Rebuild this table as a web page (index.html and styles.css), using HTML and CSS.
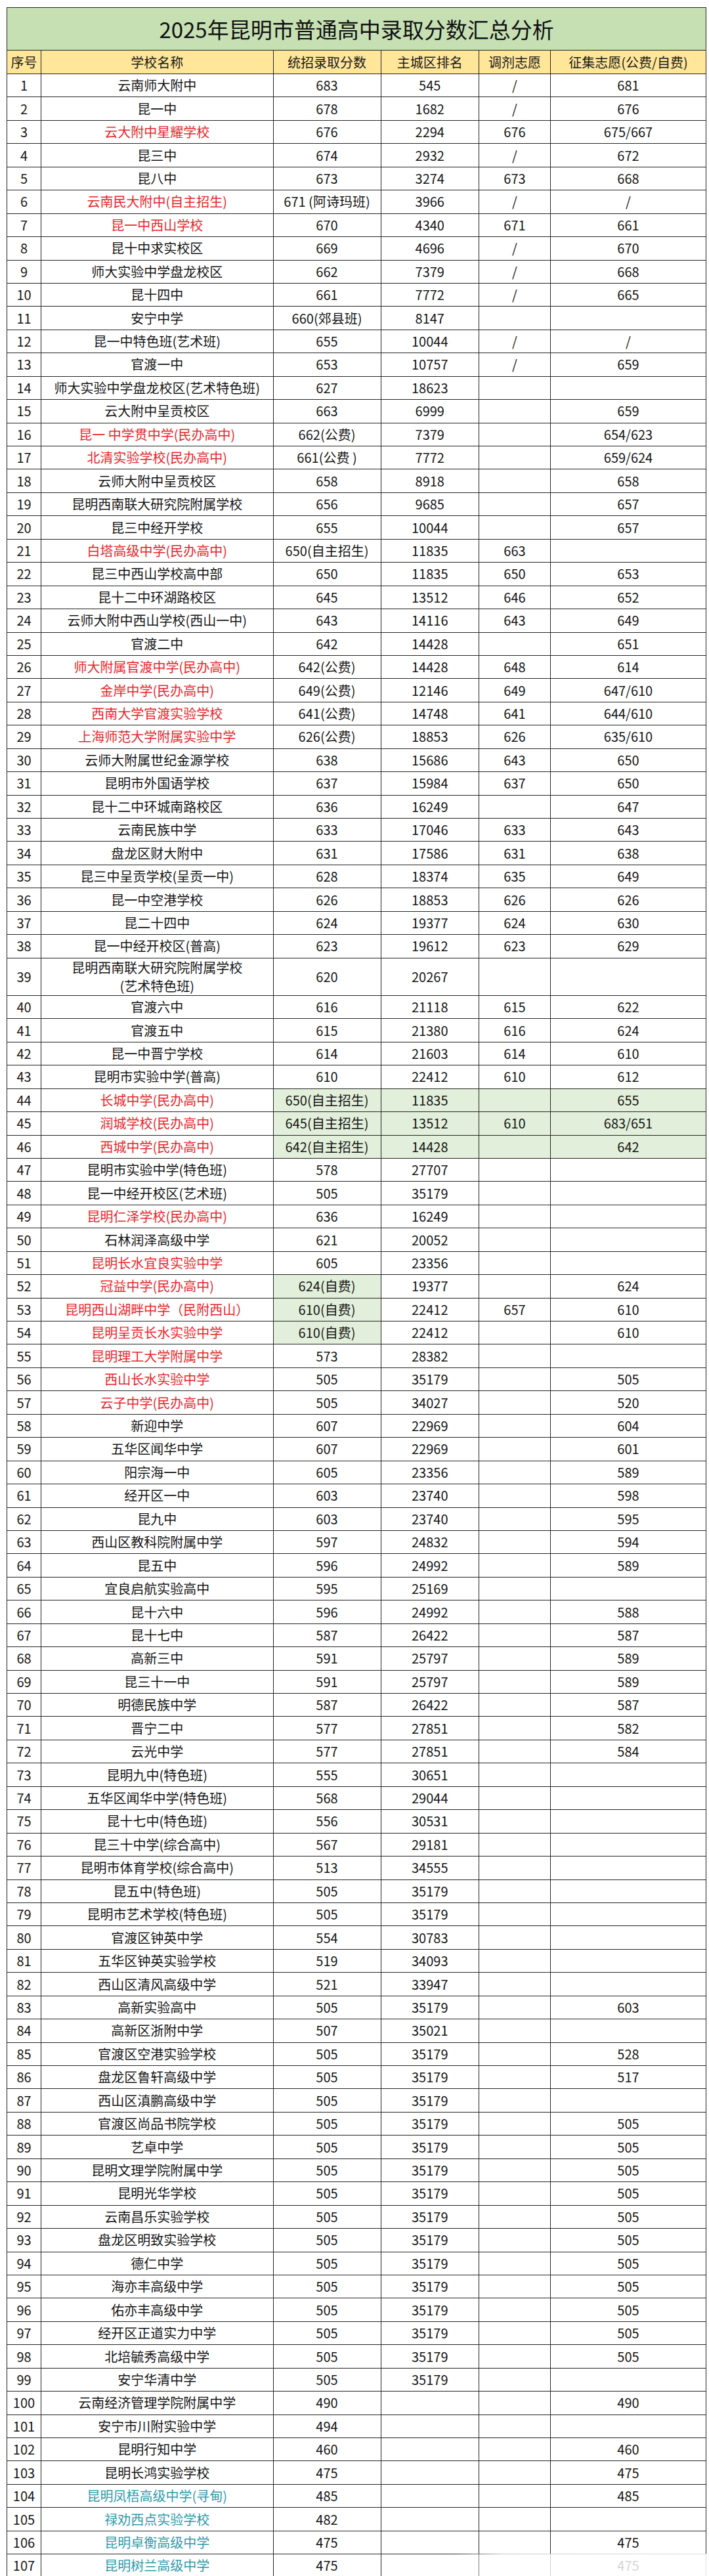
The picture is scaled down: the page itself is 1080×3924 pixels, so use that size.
FILE: index.html
```
<!DOCTYPE html>
<html lang="zh-CN">
<head>
<meta charset="utf-8">
<title>2025年昆明市普通高中录取分数汇总分析</title>
<link rel="stylesheet" href="styles.css">
</head>
<body>
<div class="page">
<table class="sheet">
<colgroup><col class="c1"><col class="c2"><col class="c3"><col class="c4"><col class="c5"><col class="c6"></colgroup>
<thead>
<tr class="title"><th colspan="6">2025年昆明市普通高中录取分数汇总分析</th></tr>
<tr class="head"><th>序号</th><th>学校名称</th><th>统招录取分数</th><th>主城区排名</th><th>调剂志愿</th><th>征集志愿(公费/自费)</th></tr>
</thead>
<tbody>
<tr><td>1</td><td>云南师大附中</td><td>683</td><td>545</td><td>/</td><td>681</td></tr>
<tr><td>2</td><td>昆一中</td><td>678</td><td>1682</td><td>/</td><td>676</td></tr>
<tr><td>3</td><td class="r">云大附中星耀学校</td><td>676</td><td>2294</td><td>676</td><td>675/667</td></tr>
<tr><td>4</td><td>昆三中</td><td>674</td><td>2932</td><td>/</td><td>672</td></tr>
<tr><td>5</td><td>昆八中</td><td>673</td><td>3274</td><td>673</td><td>668</td></tr>
<tr><td>6</td><td class="r">云南民大附中(自主招生)</td><td>671 (阿诗玛班)</td><td>3966</td><td>/</td><td>/</td></tr>
<tr><td>7</td><td class="r">昆一中西山学校</td><td>670</td><td>4340</td><td>671</td><td>661</td></tr>
<tr><td>8</td><td>昆十中求实校区</td><td>669</td><td>4696</td><td>/</td><td>670</td></tr>
<tr><td>9</td><td>师大实验中学盘龙校区</td><td>662</td><td>7379</td><td>/</td><td>668</td></tr>
<tr><td>10</td><td>昆十四中</td><td>661</td><td>7772</td><td>/</td><td>665</td></tr>
<tr><td>11</td><td>安宁中学</td><td>660(郊县班)</td><td>8147</td><td></td><td></td></tr>
<tr><td>12</td><td>昆一中特色班(艺术班)</td><td>655</td><td>10044</td><td>/</td><td>/</td></tr>
<tr><td>13</td><td>官渡一中</td><td>653</td><td>10757</td><td>/</td><td>659</td></tr>
<tr><td>14</td><td>师大实验中学盘龙校区(艺术特色班)</td><td>627</td><td>18623</td><td></td><td></td></tr>
<tr><td>15</td><td>云大附中呈贡校区</td><td>663</td><td>6999</td><td></td><td>659</td></tr>
<tr><td>16</td><td class="r">昆一 中学贯中学(民办高中)</td><td>662(公费)</td><td>7379</td><td></td><td>654/623</td></tr>
<tr><td>17</td><td class="r">北清实验学校(民办高中)</td><td>661(公费 )</td><td>7772</td><td></td><td>659/624</td></tr>
<tr><td>18</td><td>云师大附中呈贡校区</td><td>658</td><td>8918</td><td></td><td>658</td></tr>
<tr><td>19</td><td>昆明西南联大研究院附属学校</td><td>656</td><td>9685</td><td></td><td>657</td></tr>
<tr><td>20</td><td>昆三中经开学校</td><td>655</td><td>10044</td><td></td><td>657</td></tr>
<tr><td>21</td><td class="r">白塔高级中学(民办高中)</td><td>650(自主招生)</td><td>11835</td><td>663</td><td></td></tr>
<tr><td>22</td><td>昆三中西山学校高中部</td><td>650</td><td>11835</td><td>650</td><td>653</td></tr>
<tr><td>23</td><td>昆十二中环湖路校区</td><td>645</td><td>13512</td><td>646</td><td>652</td></tr>
<tr><td>24</td><td>云师大附中西山学校(西山一中)</td><td>643</td><td>14116</td><td>643</td><td>649</td></tr>
<tr><td>25</td><td>官渡二中</td><td>642</td><td>14428</td><td></td><td>651</td></tr>
<tr><td>26</td><td class="r">师大附属官渡中学(民办高中)</td><td>642(公费)</td><td>14428</td><td>648</td><td>614</td></tr>
<tr><td>27</td><td class="r">金岸中学(民办高中)</td><td>649(公费)</td><td>12146</td><td>649</td><td>647/610</td></tr>
<tr><td>28</td><td class="r">西南大学官渡实验学校</td><td>641(公费)</td><td>14748</td><td>641</td><td>644/610</td></tr>
<tr><td>29</td><td class="r">上海师范大学附属实验中学</td><td>626(公费)</td><td>18853</td><td>626</td><td>635/610</td></tr>
<tr><td>30</td><td>云师大附属世纪金源学校</td><td>638</td><td>15686</td><td>643</td><td>650</td></tr>
<tr><td>31</td><td>昆明市外国语学校</td><td>637</td><td>15984</td><td>637</td><td>650</td></tr>
<tr><td>32</td><td>昆十二中环城南路校区</td><td>636</td><td>16249</td><td></td><td>647</td></tr>
<tr><td>33</td><td>云南民族中学</td><td>633</td><td>17046</td><td>633</td><td>643</td></tr>
<tr><td>34</td><td>盘龙区财大附中</td><td>631</td><td>17586</td><td>631</td><td>638</td></tr>
<tr><td>35</td><td>昆三中呈贡学校(呈贡一中)</td><td>628</td><td>18374</td><td>635</td><td>649</td></tr>
<tr><td>36</td><td>昆一中空港学校</td><td>626</td><td>18853</td><td>626</td><td>626</td></tr>
<tr><td>37</td><td>昆二十四中</td><td>624</td><td>19377</td><td>624</td><td>630</td></tr>
<tr><td>38</td><td>昆一中经开校区(普高)</td><td>623</td><td>19612</td><td>623</td><td>629</td></tr>
<tr class="tall"><td>39</td><td class="two">昆明西南联大研究院附属学校<br>(艺术特色班)</td><td>620</td><td>20267</td><td></td><td></td></tr>
<tr><td>40</td><td>官渡六中</td><td>616</td><td>21118</td><td>615</td><td>622</td></tr>
<tr><td>41</td><td>官渡五中</td><td>615</td><td>21380</td><td>616</td><td>624</td></tr>
<tr><td>42</td><td>昆一中晋宁学校</td><td>614</td><td>21603</td><td>614</td><td>610</td></tr>
<tr><td>43</td><td>昆明市实验中学(普高)</td><td>610</td><td>22412</td><td>610</td><td>612</td></tr>
<tr><td>44</td><td class="r">长城中学(民办高中)</td><td class="g">650(自主招生)</td><td class="g">11835</td><td class="g"></td><td class="g">655</td></tr>
<tr><td>45</td><td class="r">润城学校(民办高中)</td><td class="g">645(自主招生)</td><td class="g">13512</td><td class="g">610</td><td class="g">683/651</td></tr>
<tr><td>46</td><td class="r">西城中学(民办高中)</td><td class="g">642(自主招生)</td><td class="g">14428</td><td class="g"></td><td class="g">642</td></tr>
<tr><td>47</td><td>昆明市实验中学(特色班)</td><td>578</td><td>27707</td><td></td><td></td></tr>
<tr><td>48</td><td>昆一中经开校区(艺术班)</td><td>505</td><td>35179</td><td></td><td></td></tr>
<tr><td>49</td><td class="r">昆明仁泽学校(民办高中)</td><td>636</td><td>16249</td><td></td><td></td></tr>
<tr><td>50</td><td>石林润泽高级中学</td><td>621</td><td>20052</td><td></td><td></td></tr>
<tr><td>51</td><td class="r">昆明长水宜良实验中学</td><td>605</td><td>23356</td><td></td><td></td></tr>
<tr><td>52</td><td class="r">冠益中学(民办高中)</td><td class="g">624(自费)</td><td>19377</td><td></td><td>624</td></tr>
<tr><td>53</td><td class="r">昆明西山湖畔中学（民附西山）</td><td class="g">610(自费)</td><td>22412</td><td>657</td><td>610</td></tr>
<tr><td>54</td><td class="r">昆明呈贡长水实验中学</td><td class="g">610(自费)</td><td>22412</td><td></td><td>610</td></tr>
<tr><td>55</td><td class="r">昆明理工大学附属中学</td><td>573</td><td>28382</td><td></td><td></td></tr>
<tr><td>56</td><td class="r">西山长水实验中学</td><td>505</td><td>35179</td><td></td><td>505</td></tr>
<tr><td>57</td><td class="r">云子中学(民办高中)</td><td>505</td><td>34027</td><td></td><td>520</td></tr>
<tr><td>58</td><td>新迎中学</td><td>607</td><td>22969</td><td></td><td>604</td></tr>
<tr><td>59</td><td>五华区闻华中学</td><td>607</td><td>22969</td><td></td><td>601</td></tr>
<tr><td>60</td><td>阳宗海一中</td><td>605</td><td>23356</td><td></td><td>589</td></tr>
<tr><td>61</td><td>经开区一中</td><td>603</td><td>23740</td><td></td><td>598</td></tr>
<tr><td>62</td><td>昆九中</td><td>603</td><td>23740</td><td></td><td>595</td></tr>
<tr><td>63</td><td>西山区教科院附属中学</td><td>597</td><td>24832</td><td></td><td>594</td></tr>
<tr><td>64</td><td>昆五中</td><td>596</td><td>24992</td><td></td><td>589</td></tr>
<tr><td>65</td><td>宜良启航实验高中</td><td>595</td><td>25169</td><td></td><td></td></tr>
<tr><td>66</td><td>昆十六中</td><td>596</td><td>24992</td><td></td><td>588</td></tr>
<tr><td>67</td><td>昆十七中</td><td>587</td><td>26422</td><td></td><td>587</td></tr>
<tr><td>68</td><td>高新三中</td><td>591</td><td>25797</td><td></td><td>589</td></tr>
<tr><td>69</td><td>昆三十一中</td><td>591</td><td>25797</td><td></td><td>589</td></tr>
<tr><td>70</td><td>明德民族中学</td><td>587</td><td>26422</td><td></td><td>587</td></tr>
<tr><td>71</td><td>晋宁二中</td><td>577</td><td>27851</td><td></td><td>582</td></tr>
<tr><td>72</td><td>云光中学</td><td>577</td><td>27851</td><td></td><td>584</td></tr>
<tr><td>73</td><td>昆明九中(特色班)</td><td>555</td><td>30651</td><td></td><td></td></tr>
<tr><td>74</td><td>五华区闻华中学(特色班)</td><td>568</td><td>29044</td><td></td><td></td></tr>
<tr><td>75</td><td>昆十七中(特色班)</td><td>556</td><td>30531</td><td></td><td></td></tr>
<tr><td>76</td><td>昆三十中学(综合高中)</td><td>567</td><td>29181</td><td></td><td></td></tr>
<tr><td>77</td><td>昆明市体育学校(综合高中)</td><td>513</td><td>34555</td><td></td><td></td></tr>
<tr><td>78</td><td>昆五中(特色班)</td><td>505</td><td>35179</td><td></td><td></td></tr>
<tr><td>79</td><td>昆明市艺术学校(特色班)</td><td>505</td><td>35179</td><td></td><td></td></tr>
<tr><td>80</td><td>官渡区钟英中学</td><td>554</td><td>30783</td><td></td><td></td></tr>
<tr><td>81</td><td>五华区钟英实验学校</td><td>519</td><td>34093</td><td></td><td></td></tr>
<tr><td>82</td><td>西山区清风高级中学</td><td>521</td><td>33947</td><td></td><td></td></tr>
<tr><td>83</td><td>高新实验高中</td><td>505</td><td>35179</td><td></td><td>603</td></tr>
<tr><td>84</td><td>高新区浙附中学</td><td>507</td><td>35021</td><td></td><td></td></tr>
<tr><td>85</td><td>官渡区空港实验学校</td><td>505</td><td>35179</td><td></td><td>528</td></tr>
<tr><td>86</td><td>盘龙区鲁轩高级中学</td><td>505</td><td>35179</td><td></td><td>517</td></tr>
<tr><td>87</td><td>西山区滇鹏高级中学</td><td>505</td><td>35179</td><td></td><td></td></tr>
<tr><td>88</td><td>官渡区尚品书院学校</td><td>505</td><td>35179</td><td></td><td>505</td></tr>
<tr><td>89</td><td>艺卓中学</td><td>505</td><td>35179</td><td></td><td>505</td></tr>
<tr><td>90</td><td>昆明文理学院附属中学</td><td>505</td><td>35179</td><td></td><td>505</td></tr>
<tr><td>91</td><td>昆明光华学校</td><td>505</td><td>35179</td><td></td><td>505</td></tr>
<tr><td>92</td><td>云南昌乐实验学校</td><td>505</td><td>35179</td><td></td><td>505</td></tr>
<tr><td>93</td><td>盘龙区明致实验学校</td><td>505</td><td>35179</td><td></td><td>505</td></tr>
<tr><td>94</td><td>德仁中学</td><td>505</td><td>35179</td><td></td><td>505</td></tr>
<tr><td>95</td><td>海亦丰高级中学</td><td>505</td><td>35179</td><td></td><td>505</td></tr>
<tr><td>96</td><td>佑亦丰高级中学</td><td>505</td><td>35179</td><td></td><td>505</td></tr>
<tr><td>97</td><td>经开区正道实力中学</td><td>505</td><td>35179</td><td></td><td>505</td></tr>
<tr><td>98</td><td>北培毓秀高级中学</td><td>505</td><td>35179</td><td></td><td>505</td></tr>
<tr><td>99</td><td>安宁华清中学</td><td>505</td><td>35179</td><td></td><td></td></tr>
<tr><td>100</td><td>云南经济管理学院附属中学</td><td>490</td><td></td><td></td><td>490</td></tr>
<tr><td>101</td><td>安宁市川附实验中学</td><td>494</td><td></td><td></td><td></td></tr>
<tr><td>102</td><td>昆明行知中学</td><td>460</td><td></td><td></td><td>460</td></tr>
<tr><td>103</td><td>昆明长鸿实验学校</td><td>475</td><td></td><td></td><td>475</td></tr>
<tr><td>104</td><td class="t">昆明凤梧高级中学(寻甸)</td><td>485</td><td></td><td></td><td>485</td></tr>
<tr><td>105</td><td class="t">禄劝西点实验学校</td><td>482</td><td></td><td></td><td></td></tr>
<tr><td>106</td><td class="t">昆明卓衡高级中学</td><td>475</td><td></td><td></td><td>475</td></tr>
<tr><td>107</td><td class="t">昆明树兰高级中学</td><td>475</td><td></td><td></td><td>475</td></tr>
</tbody>
</table>
<div class="fade"></div>
</div>
</body>
</html>
```

FILE: styles.css
```
* { box-sizing: border-box; }
html, body { margin: 0; padding: 0; background: #ffffff; }
body {
  font-family: "Noto Sans CJK SC", "Noto Sans", "Liberation Sans", sans-serif;
  color: #151515;
}
.page {
  position: relative;
  padding: 11px 5px 0 10px;
  height: 3924px;
  overflow: hidden;
}
.sheet {
  border-collapse: collapse;
  table-layout: fixed;
  width: 1065px;
}
.c1 { width: 52px; }
.c2 { width: 353.5px; }
.c3 { width: 164px; }
.c4 { width: 149.5px; }
.c5 { width: 109px; }
.c6 { width: 237px; }
.sheet th, .sheet td {
  border: 1px solid #262626;
  padding: 0;
  text-align: center;
  vertical-align: middle;
  font-size: 20px;
  font-weight: 400;
  line-height: 24px;
  white-space: nowrap;
}
.title th {
  height: 65px;
  background: #c6e0b4;
  font-size: 33px;
  line-height: 40px;
  color: #111;
}
.head th {
  height: 36px;
  background: #ffe699;
  color: #1a1a1a;
}
.sheet tbody tr { height: 35.45px; }
.sheet tbody tr.tall { height: 57.3px; }
.sheet td.two { line-height: 28px; }
.r { color: #e8262b; }
.t { color: #2f9aa9; }
.g { background: #e2efda; }
.fade {
  position: absolute;
  right: 0;
  bottom: 0;
  width: 390px;
  height: 34px;
  background: linear-gradient(to right, rgba(255,255,255,0), rgba(255,255,255,0.75) 20%, rgba(255,255,255,0.85));
}
```
